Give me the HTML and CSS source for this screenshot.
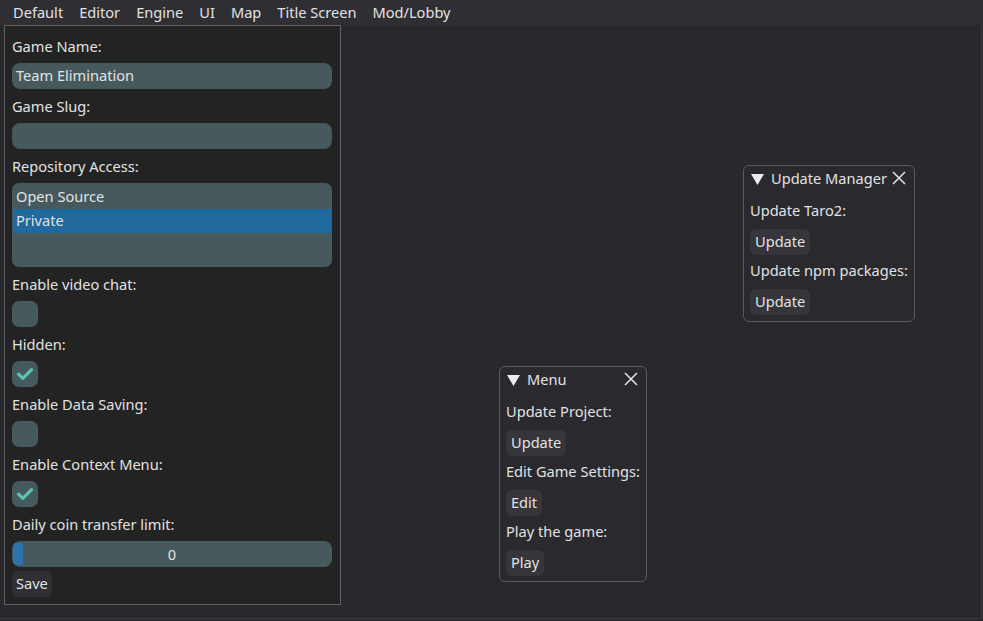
FILE: index.html
```html
<!DOCTYPE html>
<html>
<head>
<meta charset="utf-8">
<link rel="stylesheet" href="styles.css">
</head>
<body>
<div class="menubar">
  <span class="menu-item">Default</span>
  <span class="menu-item">Editor</span>
  <span class="menu-item">Engine</span>
  <span class="menu-item">UI</span>
  <span class="menu-item">Map</span>
  <span class="menu-item">Title Screen</span>
  <span class="menu-item">Mod/Lobby</span>
</div>
<div class="workspace">
  <div class="panel">
    <div class="label">Game Name:</div>
    <div class="input">Team Elimination</div>
    <div class="label">Game Slug:</div>
    <div class="input"></div>
    <div class="label">Repository Access:</div>
    <div class="listbox">
      <div class="list-item">Open Source</div>
      <div class="list-item selected">Private</div>
    </div>
    <div class="label">Enable video chat:</div>
    <div class="checkbox"></div>
    <div class="label">Hidden:</div>
    <div class="checkbox"><svg width="26" height="26" viewBox="0 0 26 26"><path d="M6.5 13.2 L10.8 17.4 L19.6 8.6" fill="none" stroke="#57c5b2" stroke-width="3.2" stroke-linecap="round" stroke-linejoin="round"/></svg></div>
    <div class="label">Enable Data Saving:</div>
    <div class="checkbox"></div>
    <div class="label">Enable Context Menu:</div>
    <div class="checkbox"><svg width="26" height="26" viewBox="0 0 26 26"><path d="M6.5 13.2 L10.8 17.4 L19.6 8.6" fill="none" stroke="#57c5b2" stroke-width="3.2" stroke-linecap="round" stroke-linejoin="round"/></svg></div>
    <div class="label">Daily coin transfer limit:</div>
    <div class="slider"><span class="grab"></span><span class="slider-value">0</span></div>
    <div class="button save">Save</div>
  </div>

  <div class="window win-update">
    <div class="titlebar">
      <svg class="tri" width="13" height="12" viewBox="0 0 13 12"><path d="M0 1 L13 1 L6.5 12 Z" fill="#ececec"/></svg>
      <span class="title">Update Manager</span>
      <svg class="close" width="14" height="14" viewBox="0 0 14 14"><path d="M1 1 L13 13 M13 1 L1 13" stroke="#e6e6e6" stroke-width="1.5"/></svg>
    </div>
    <div class="win-body">
      <div class="wlabel">Update Taro2:</div>
      <div class="button">Update</div>
      <div class="wlabel">Update npm packages:</div>
      <div class="button">Update</div>
    </div>
  </div>

  <div class="window win-menu">
    <div class="titlebar">
      <svg class="tri" width="13" height="12" viewBox="0 0 13 12"><path d="M0 1 L13 1 L6.5 12 Z" fill="#ececec"/></svg>
      <span class="title">Menu</span>
      <svg class="close" width="14" height="14" viewBox="0 0 14 14"><path d="M1 1 L13 13 M13 1 L1 13" stroke="#e6e6e6" stroke-width="1.5"/></svg>
    </div>
    <div class="win-body">
      <div class="wlabel">Update Project:</div>
      <div class="button">Update</div>
      <div class="wlabel">Edit Game Settings:</div>
      <div class="button">Edit</div>
      <div class="wlabel">Play the game:</div>
      <div class="button">Play</div>
    </div>
  </div>
</div>
</body>
</html>
```
FILE: styles.css
```css
html, body {
  margin: 0;
  padding: 0;
  width: 983px;
  height: 621px;
  overflow: hidden;
  background: #28282d;
  font-family: "Noto Sans", "Open Sans", sans-serif;
  font-size: 14.6px;
  color: #e2e2e2;
}
.menubar {
  height: 25px;
  background: #2e2e33;
  display: flex;
  align-items: center;
  padding-left: 5px;
  line-height: 25px;
}
.menu-item {
  padding: 0 8px;
  white-space: nowrap;
}
.workspace {
  position: relative;
  box-sizing: border-box;
  width: 982px;
  height: 594px;
  border-right: 1px solid #3c3c42;
  border-bottom: 1px solid #3c3c42;
}
.panel {
  margin-left: 4px;
  width: 337px;
  height: 580px;
  box-sizing: border-box;
  background: #232323;
  border: 1px solid #626266;
  padding: 11px 8px 0 7px;
  display: flex;
  flex-direction: column;
}
.label {
  line-height: 18px;
  height: 20px;
  white-space: nowrap;
}
.input, .listbox, .checkbox, .slider {
  background: #465a5e;
  border-radius: 8px;
}
.input {
  margin: 6px 0 8px;
  height: 26px;
  line-height: 24px;
  padding-left: 4px;
}
.listbox {
  margin: 6px 0 8px;
  height: 84px;
  box-sizing: border-box;
  padding: 2px 1px;
  border-radius: 7px;
}
.list-item {
  height: 24px;
  line-height: 22px;
  padding-left: 3px;
}
.list-item.selected {
  background: #1f699f;
}
.checkbox {
  margin: 6px 0 8px;
  width: 26px;
  height: 26px;
  border-radius: 7px;
}
.checkbox svg { display: block; }
.slider {
  margin: 6px 0 4px;
  height: 26px;
  position: relative;
  display: flex;
  align-items: center;
  justify-content: center;
}
.grab {
  position: absolute;
  left: 1px;
  top: 2px;
  width: 10px;
  height: 22px;
  background: #2c72ab;
  border-radius: 4px 2px 2px 4px;
}
.slider-value { line-height: 24px; }
.button {
  align-self: flex-start;
  height: 26px;
  line-height: 24px;
  padding: 0 5px;
  background: #35353b;
  border-radius: 6px;
  white-space: nowrap;
}
.save {
  background: #2f2f34;
  padding: 0 4px;
}
.window {
  position: absolute;
  box-sizing: border-box;
  border: 1px solid #59595e;
  border-radius: 6px;
  background: #29292e;
}
.win-update {
  left: 743px;
  top: 140px;
  width: 172px;
  height: 157px;
}
.win-menu {
  left: 499px;
  top: 341px;
  width: 148px;
  height: 216px;
}
.titlebar {
  height: 25px;
  display: flex;
  align-items: center;
  padding-left: 7px;
  position: relative;
}
.tri { display: block; margin-top: 0; }
.title {
  margin-left: 7px;
  line-height: 23px;
  white-space: nowrap;
}
.close {
  position: absolute;
  right: 8px;
  top: 5px;
}
.win-body {
  padding: 10px 6px 0;
  display: flex;
  flex-direction: column;
}
.wlabel {
  line-height: 18px;
  height: 20px;
  white-space: nowrap;
  margin-bottom: 8px;
}
.win-body .button + .wlabel {
  margin-top: 6px;
}
```
